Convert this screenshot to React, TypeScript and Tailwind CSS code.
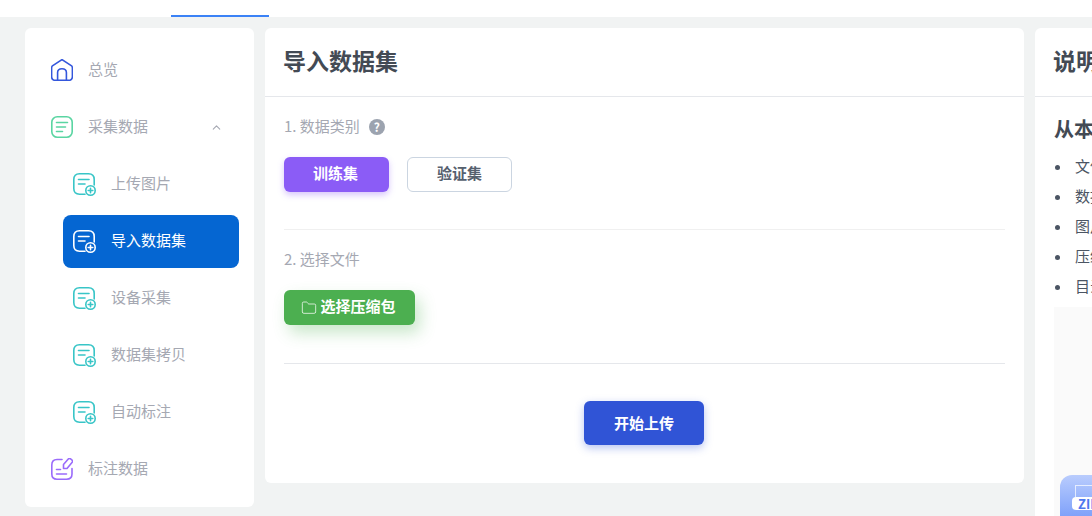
import { ChevronUp, Folder } from "lucide-react";

const font = "font-['Noto_Sans_CJK_SC','Liberation_Sans',sans-serif]";

function HomeIcon() {
    return (
        <svg width="22" height="22" viewBox="1 1 22 22" fill="none" stroke="#3457dc" strokeWidth="1.6" strokeLinejoin="round">
            <path d="M12 1.6 L21.6 7.8 Q22.4 8.6 22.4 10.2 V18.5 Q22.4 22.4 18.5 22.4 H5.5 Q1.6 22.4 1.6 18.5 V10.2 Q1.6 8.6 2.4 7.8 Z" />
            <path d="M7.6 22.4 V14.5 Q7.6 10.8 12 10.8 Q16.4 10.8 16.4 14.5 V22.4" />
        </svg>
    );
}

function ListIcon() {
    return (
        <svg width="22" height="22" viewBox="1 1 22 22" fill="none" stroke="#5ad5a2" strokeWidth="1.6" strokeLinecap="round">
            <rect x="1.8" y="1.8" width="20.4" height="20.4" rx="5.5" />
            <path d="M6.5 7.5 H17.5 M6.5 12 H15.5 M6.5 16.5 H12.5" />
        </svg>
    );
}

function AddListIcon({ color = "#38c5c7" }: { color?: string }) {
    return (
        <svg width="23" height="23" viewBox="1 1 23 23" fill="none" stroke={color} strokeWidth="1.6" strokeLinecap="round">
            <path d="M13 22.2 H7.5 Q1.8 22.2 1.8 16.5 V7.5 Q1.8 1.8 7.5 1.8 H16.5 Q22.2 1.8 22.2 7.5 V13" />
            <path d="M6.5 7.5 H17 M6.5 12 H13" />
            <circle cx="18.5" cy="18.5" r="4.7" />
            <path d="M18.5 16.2 V20.8 M16.2 18.5 H20.8" />
        </svg>
    );
}

function EditIcon() {
    return (
        <svg width="22" height="22" viewBox="1 1 22 22" fill="none" stroke="#9a6bfb" strokeWidth="1.6" strokeLinecap="round" strokeLinejoin="round">
            <path d="M12 2.5 H7 Q1.8 2.5 1.8 8 V17 Q1.8 22.2 7 22.2 H16.5 Q22 22.2 22 17 V11.5" />
            <path d="M13.5 11.5 L13.5 7.5 L18.5 1.8 Q19.5 1 20.8 2 L22.3 3.4 Q23 4.5 22 5.5 L17 11.5 Z" />
            <path d="M6.5 12.5 H10.5 M6.5 17 H16.5" />
        </svg>
    );
}

function MenuItem({ icon, label, arrow }: { icon: React.ReactNode; label: string; arrow?: boolean }) {
    return (
        <div className="flex items-center h-[53px] pl-[11px] pr-[16px] mb-1">
            <span className="w-[22px] pb-[2px] shrink-0">{icon}</span>
            <span className="ml-[15px] pb-[2px] text-[15px] text-[#a5a8b2] flex-1">{label}</span>
            {arrow && <ChevronUp size={13} color="#a5a8b2" />}
        </div>
    );
}

function SubItem({ label, active }: { label: string; active?: boolean }) {
    return (
        <div className={`flex items-center h-[53px] ml-[23px] pl-[10px] mb-1 rounded-lg ${active ? "bg-[#0566d2]" : ""}`}>
            <span className="w-[23px] shrink-0">
                <AddListIcon color={active ? "#ffffff" : "#38c5c7"} />
            </span>
            <span className={`ml-[15px] pb-[2px] text-[15px] ${active ? "text-white" : "text-[#a5a8b2]"}`}>{label}</span>
        </div>
    );
}

function ImportPanel() {
    return (
        <div className="w-[759px] h-[455px] shrink-0 bg-white rounded-md">
            <div className="h-[69px] border-b border-[#e5e7eb] flex items-center px-[18px]">
                <h2 className="pb-1 text-[23px] font-bold text-[#434a54]">导入数据集</h2>
            </div>
            <div className="px-[19px]">
                <div className="flex items-center h-[20px] mt-[20px] text-[15px] text-[#a5a8b2]">
                    <span className="pb-[2px]">1. 数据类别</span>
                    <span className="ml-[9px] w-4 h-4 rounded-full bg-[#9ca3af] text-white text-[12px] font-bold flex items-center justify-center">?</span>
                </div>
                <div className="flex gap-[18px] mt-[20px]">
                    <button className="w-[105px] h-[35px] pb-[2px] pr-[2px] rounded-md bg-[#8b5cf6] text-white text-[15px] font-bold shadow-[0_3px_6px_rgba(139,92,246,0.35)]">训练集</button>
                    <button className="w-[105px] h-[35px] pb-[2px] rounded-md bg-white border border-[#cbd5e1] text-[#56606e] text-[15px] font-bold">验证集</button>
                </div>
                <div className="border-t border-[#f0f0f0] mt-[37px]" />
                <div className="h-[20px] mt-[20px] pb-[2px] text-[15px] text-[#a5a8b2] flex items-center">2. 选择文件</div>
                <button className="mt-[20px] w-[131px] h-[35px] pr-[2px] rounded-md bg-[#4caf50] text-white text-[15px] font-bold flex items-center justify-center gap-[3px] shadow-[5px_8px_16px_rgba(76,175,80,0.3)]">
                    <Folder size={16} strokeWidth={1.1} />
                    <span className="pb-[2px]">选择压缩包</span>
                </button>
                <div className="border-t border-[#e5e7eb] mt-[38px]" />
                <div className="ml-[300px] mt-[37px]">
                    <button className="w-[120px] h-[44px] rounded-md bg-[#3054d6] text-white text-[15px] font-bold shadow-[0_3px_8px_rgba(48,84,214,0.35)]">开始上传</button>
                </div>
            </div>
        </div>
    );
}

function HelpPanel() {
    const rows = ["文件格式", "数据结构", "图片格式", "压缩包名", "目录结构"];
    return (
        <div className="w-[400px] shrink-0 bg-white rounded-t-md">
            <div className="h-[69px] border-b border-[#e5e7eb] flex items-center px-[18px]">
                <h2 className="pb-1 text-[23px] font-bold text-[#434a54]">说明</h2>
            </div>
            <div className="px-[19px]">
                <h3 className="mt-[20px] h-[27px] pb-1 flex items-center text-[20px] font-bold text-[#434a54]">从本地导入</h3>
                <ul className="mt-[8px]">
                    {rows.map((row) => (
                        <li key={row} className="flex items-center h-[30px] text-[15px] text-[#4b5563]">
                            <span className="w-[5px] h-[5px] ml-[1px] rounded-full bg-[#4b5563]" />
                            <span className="ml-[15px] pb-[2px]">{row}</span>
                        </li>
                    ))}
                </ul>
                <div className="h-[300px] mt-[5px] bg-[#fafafa] pt-[168px] pl-[6px]">
                    <div className="w-[70px] h-[70px] rounded-xl bg-gradient-to-b from-[#b9ccfd] to-[#5a82f5] pt-[10px] pl-[12px]">
                        <div className="w-[50px] h-[12px] ml-[3px] border border-b-0 border-white/70" />
                        <span className="block w-[50px] h-[13px] bg-white rounded-sm text-[#4f79ee] text-[13px] font-bold pl-[6px] leading-[13px]">ZIP</span>
                    </div>
                </div>
            </div>
        </div>
    );
}

export default function App() {
    return (
        <div className={`w-[1092px] h-[516px] overflow-hidden bg-[#f1f3f3] ${font}`}>
            <div className="h-[17px] bg-white">
                <div className="ml-[171px] w-[98px] h-[17px] border-b-2 border-[#3b82f6]" />
            </div>
            <div className="flex items-start gap-[11px] pl-[25px] pt-[11px]">
                <div className="w-[229px] h-[479px] shrink-0 bg-white rounded-md px-[15px] pt-[16px]">
                    <MenuItem icon={<HomeIcon />} label="总览" />
                    <MenuItem icon={<ListIcon />} label="采集数据" arrow />
                    <SubItem label="上传图片" />
                    <SubItem label="导入数据集" active />
                    <SubItem label="设备采集" />
                    <SubItem label="数据集拷贝" />
                    <SubItem label="自动标注" />
                    <MenuItem icon={<EditIcon />} label="标注数据" />
                </div>
                <ImportPanel />
                <HelpPanel />
            </div>
        </div>
    );
}
